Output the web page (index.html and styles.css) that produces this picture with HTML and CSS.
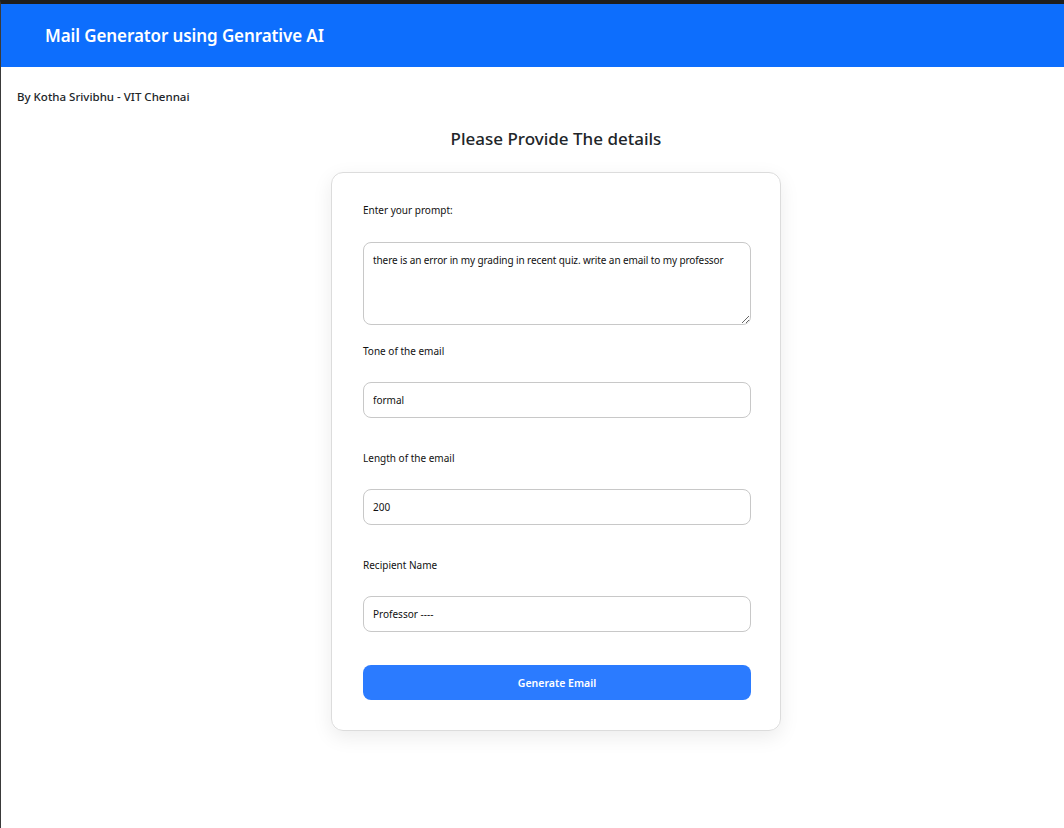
FILE: index.html
```html
<!DOCTYPE html>
<html lang="en">
<head>
<meta charset="utf-8">
<title>Mail Generator</title>
<link rel="stylesheet" href="styles.css">
</head>
<body>
<header class="topbar">
  <h1 class="brand">Mail Generator using Genrative AI</h1>
</header>
<p class="byline">By Kotha Srivibhu - VIT Chennai</p>
<main class="content">
  <h2 class="heading">Please Provide The details</h2>
  <form class="card">
    <label class="label" for="prompt">Enter your prompt:</label>
    <textarea id="prompt" class="field area">there is an error in my grading in recent quiz. write an email to my professor</textarea>
    <label class="label label-after-area" for="tone">Tone of the email</label>
    <input id="tone" class="field" type="text" value="formal">
    <label class="label" for="len">Length of the email</label>
    <input id="len" class="field" type="text" value="200">
    <label class="label" for="rec">Recipient Name</label>
    <input id="rec" class="field" type="text" value="Professor ----">
    <button type="button" class="btn">Generate Email</button>
  </form>
</main>
</body>
</html>
```
FILE: styles.css
```css
html, body {
  margin: 0;
  padding: 0;
  background: #ffffff;
}
body {
  min-height: 824px;
  border-top: 4px solid #1e1e1e;
  border-left: 1px solid #3a3a3a;
  font-family: "Noto Sans", "Open Sans", sans-serif;
  color: #212529;
}
.topbar {
  height: 63px;
  background: #0d6efd;
  display: flex;
  align-items: center;
  padding-left: 44px;
}
.brand {
  margin: 0;
  color: #ffffff;
  font-size: 17px;
  font-weight: 600;
  letter-spacing: -0.1px;
}
.byline {
  margin: 22px 0 0 16px;
  font-size: 11.5px;
  font-weight: 500;
  line-height: 16px;
}
.content {
  padding-left: 47px;
}
.heading {
  margin: 22px 0 0;
  text-align: center;
  font-size: 17px;
  font-weight: 500;
  line-height: 24px;
}
.card {
  width: 450px;
  box-sizing: border-box;
  margin: 21px auto 0;
  padding: 29px 29px 30px 31px;
  border: 1px solid #dcdcdc;
  border-radius: 12px;
  box-shadow: 0 6px 20px rgba(0, 0, 0, 0.08);
  display: flex;
  flex-direction: column;
}
.label {
  font-size: 10px;
  line-height: 16px;
  color: #111;
  margin-top: 32px;
}
.label:first-child { margin-top: 0; }
.label-after-area { margin-top: 18px; }
.field {
  margin-top: 24px;
  height: 36px;
  box-sizing: border-box;
  border: 1px solid #c8c8c8;
  border-radius: 8px;
  padding: 0 9px;
  font-family: inherit;
  font-size: 10px;
  color: #111;
  background: #fff;
  outline: none;
}
.label + .field { margin-top: 23px; }
.label:first-child + .field { margin-top: 24px; }
.area {
  height: 83px;
  padding: 9px 9px;
  line-height: 16px;
  resize: vertical;
  letter-spacing: -0.1px;
}
.btn {
  margin-top: 33px;
  height: 35px;
  border: none;
  border-radius: 8px;
  background: #2b7bff;
  color: #ffffff;
  font-family: inherit;
  font-size: 10.5px;
  font-weight: 600;
  cursor: pointer;
}
```
